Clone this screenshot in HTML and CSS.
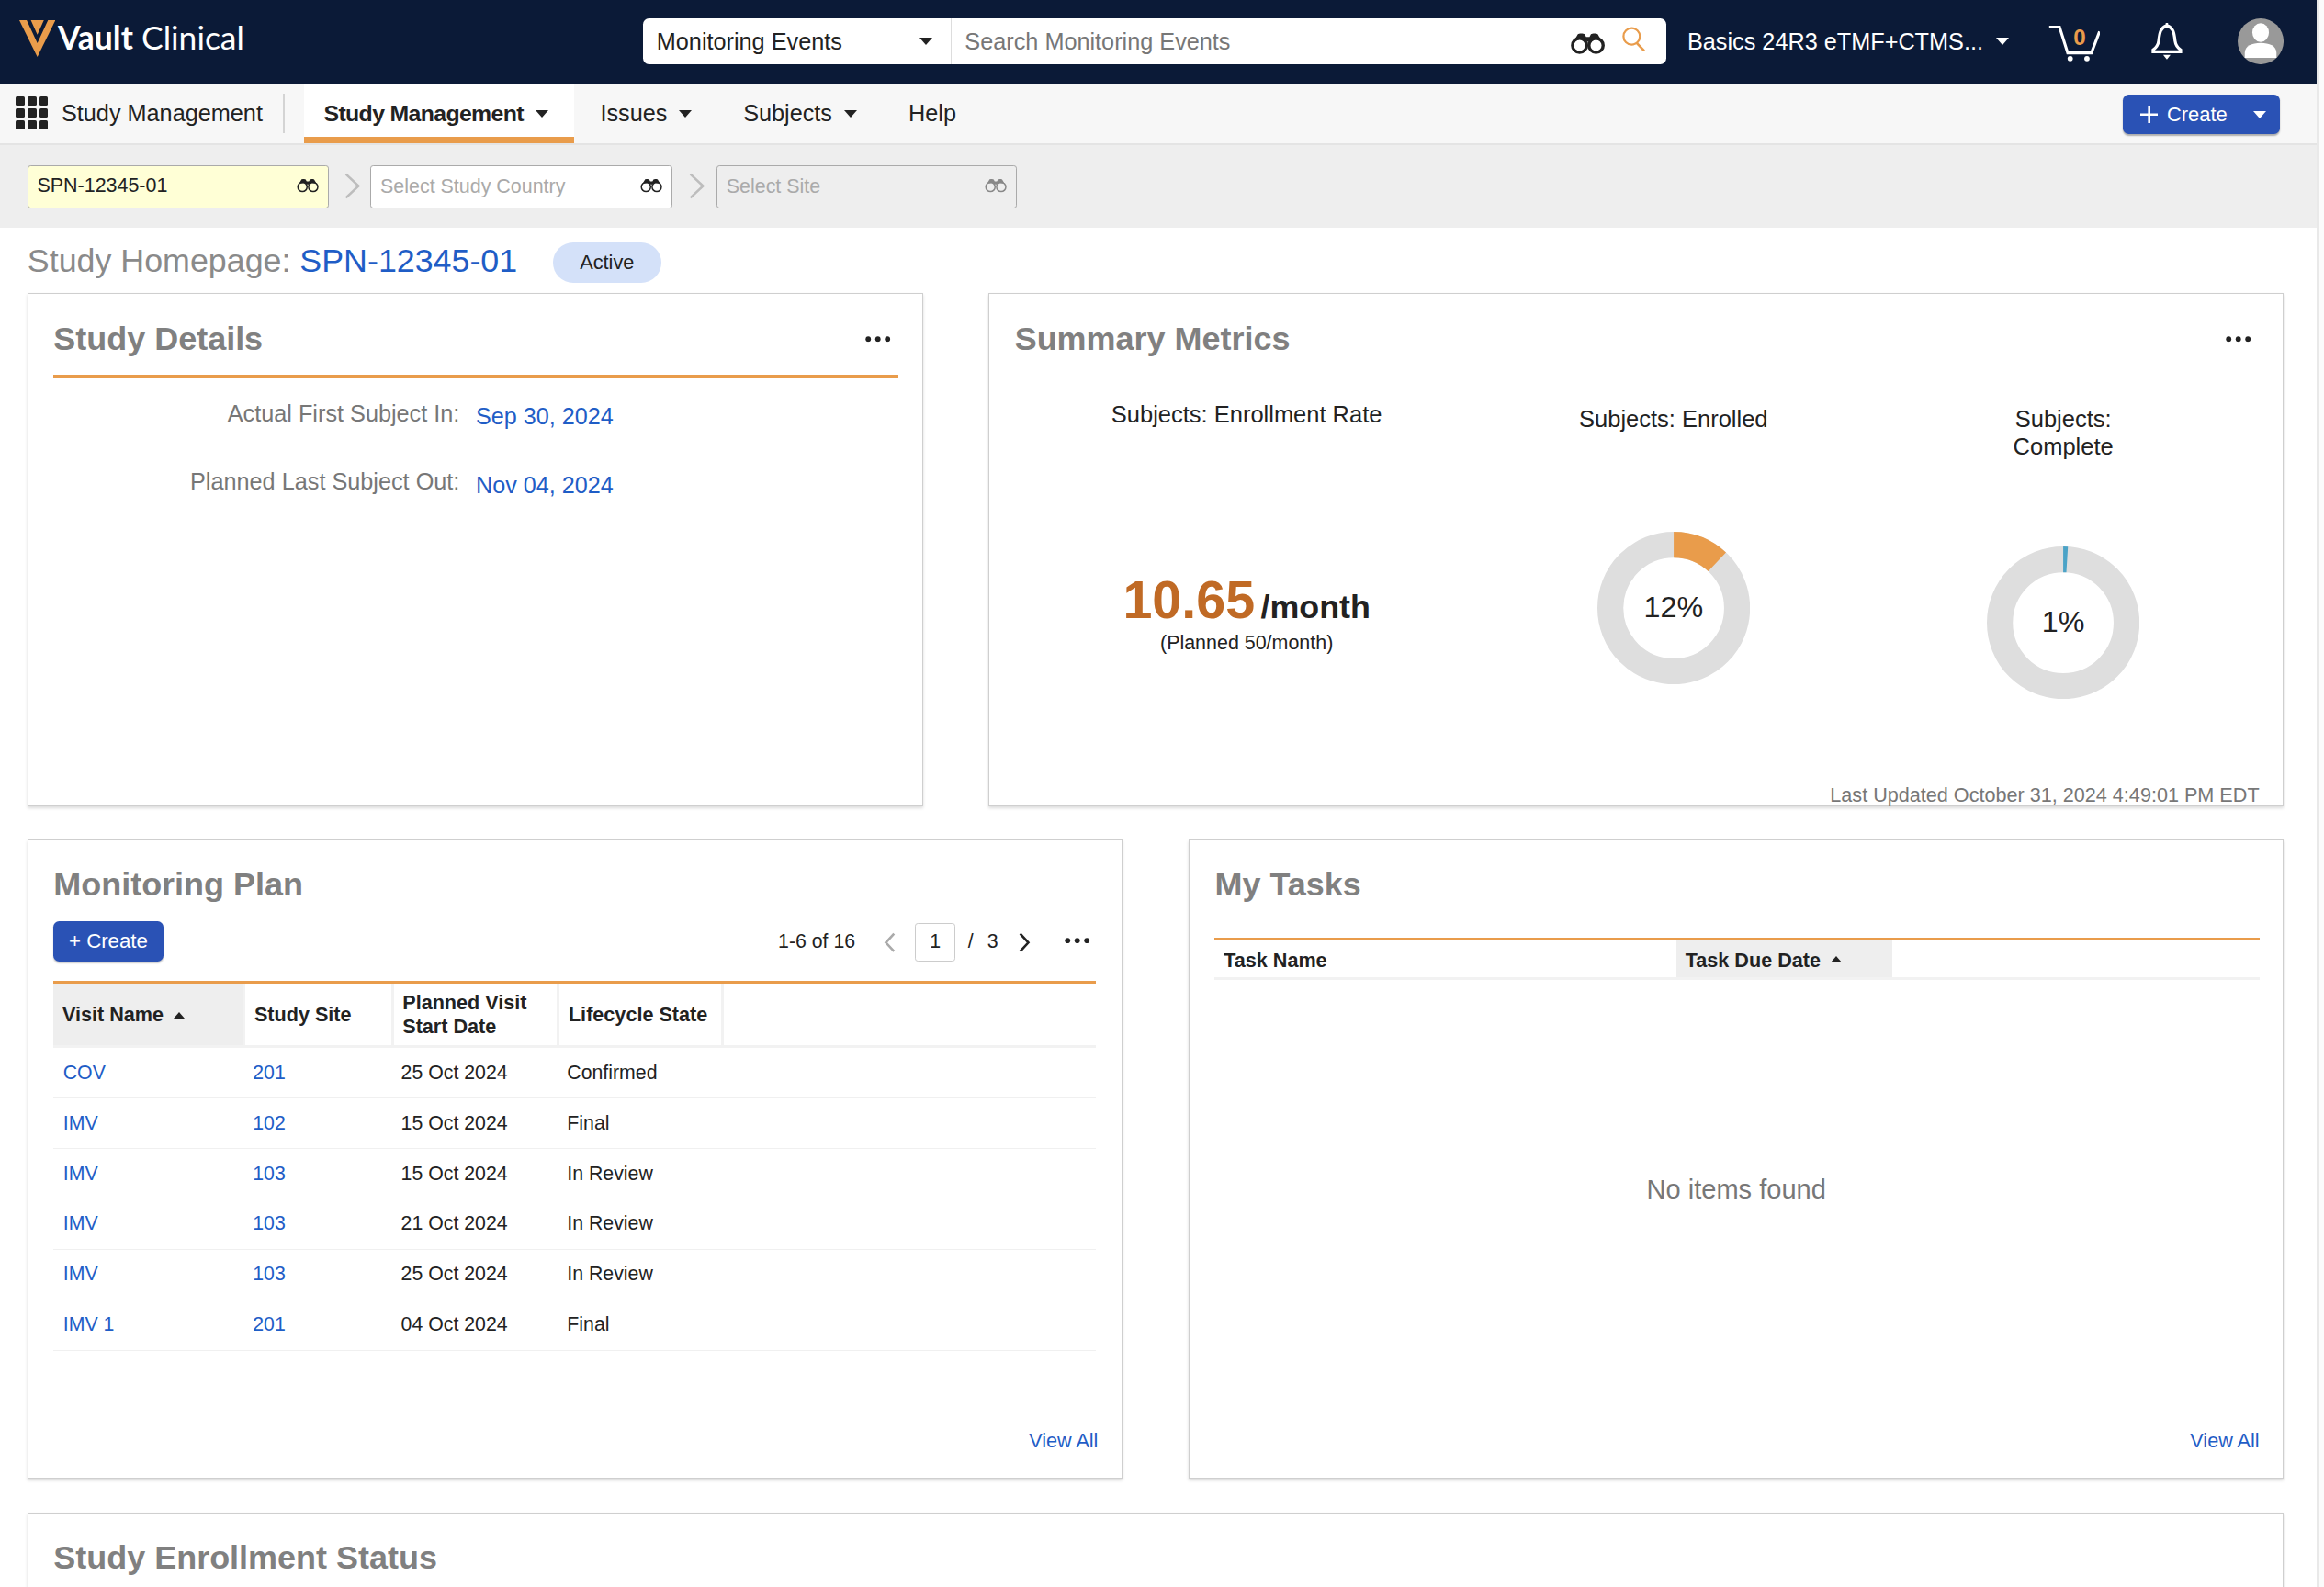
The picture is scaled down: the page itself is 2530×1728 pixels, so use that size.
FILE: index.html
```html
<!DOCTYPE html>
<html lang="en">
<head>
<meta charset="utf-8">
<title>Vault Clinical - Study Homepage</title>
<link rel="stylesheet" href="styles.css">
</head>
<body>
<svg class="defs" width="0" height="0" aria-hidden="true">
  <defs>
    <symbol id="binoc" viewBox="0 0 24 15">
      <path d="M2.5 5.5 5 1.2C5.6.4 9 .4 9.8 1.2L10.8 3h2.4l1-1.8c.8-.8 4.2-.8 4.8 0L21.5 5.5 16 4.6 12 6.4 8 4.6z" fill="currentColor" stroke="none"/>
      <circle cx="6.2" cy="9" r="5" fill="none" stroke="currentColor"/>
      <circle cx="17.8" cy="9" r="5" fill="none" stroke="currentColor"/>
    </symbol>
    <symbol id="dots" viewBox="0 0 17 4">
      <circle cx="2" cy="2" r="1.8" fill="currentColor"/>
      <circle cx="8.5" cy="2" r="1.8" fill="currentColor"/>
      <circle cx="15" cy="2" r="1.8" fill="currentColor"/>
    </symbol>
  </defs>
</svg>
<div class="app">
  <header class="topbar">
    <div class="brand">
      <svg class="logo-mark" viewBox="0 0 24.4 24.8" aria-hidden="true">
        <polygon points="0,0 24.4,0 12.2,24.8" fill="#e99c4b"/>
        <polygon points="5,0 12.2,15.5 19.4,0 16.6,0 12.2,9.8 7.8,0" fill="#0b1a37"/>
      </svg>
      <span class="brand-name"><b>Vault</b> Clinical</span>
    </div>
    <div class="search">
      <div class="search-scope"><span>Monitoring Events</span><i class="caret caret-dark"></i></div>
      <div class="search-field">
        <span class="search-ph">Search Monitoring Events</span>
        <svg class="binoc-lg"><use href="#binoc"/></svg>
        <svg class="magnifier" viewBox="0 0 16 16" aria-hidden="true">
          <circle cx="6.6" cy="6.2" r="5.2" fill="none" stroke="#e99c4b" stroke-width="1.3"/>
          <path d="M9.8 10.4 14.6 15.4" stroke="#e99c4b" stroke-width="1.5" fill="none"/>
        </svg>
      </div>
    </div>
    <div class="context"><span>Basics 24R3 eTMF+CTMS...</span><i class="caret caret-light"></i></div>
    <svg class="cart" viewBox="0 0 35 25" aria-hidden="true">
      <path d="M.5 1.5H7.5L13 19H29L34.5 4.5" fill="none" stroke="#fff" stroke-width="1.9"/>
      <circle cx="14.7" cy="22.8" r="1.8" fill="#fff"/>
      <circle cx="26" cy="22.8" r="1.8" fill="#fff"/>
      <text x="21" y="13.4" class="cart-count">0</text>
    </svg>
    <svg class="bell" viewBox="0 0 21 25" aria-hidden="true">
      <path d="M10.5 1.8C6.2 3.2 5.6 6.5 5 12 4.6 15 3.2 16.8 1.2 18.2V19.4H19.8V18.2C17.8 16.8 16.4 15 16 12 15.4 6.5 14.8 3.2 10.5 1.8Z" fill="none" stroke="#fff" stroke-width="2"/>
      <path d="M10.5 0v2.5" stroke="#fff" stroke-width="1.6"/>
      <path d="M8 21.5h5L10.5 24.6z" fill="#fff"/>
    </svg>
    <svg class="avatar" viewBox="0 0 31 31" aria-hidden="true">
      <circle cx="15.5" cy="15.5" r="15.5" fill="#999"/>
      <ellipse cx="15.5" cy="9.6" rx="5.6" ry="6.4" fill="#fff"/>
      <path d="M4.8 26.6V23.4C4.8 18.6 9.6 16.6 15.5 16.6S26.2 18.6 26.2 23.4V26.6Z" fill="#fff"/>
    </svg>
  </header>

  <nav class="navbar">
    <div class="app-switch">
      <span class="grid-icon"><i></i><i></i><i></i><i></i><i></i><i></i><i></i><i></i><i></i></span>
      <span class="app-name">Study Management</span>
    </div>
    <div class="tab tab-active"><span>Study Management</span><i class="caret caret-dark"></i></div>
    <div class="tab tab-issues"><span>Issues</span><i class="caret caret-dark"></i></div>
    <div class="tab tab-subjects"><span>Subjects</span><i class="caret caret-dark"></i></div>
    <div class="tab tab-help"><span>Help</span></div>
    <div class="split-btn">
      <span class="split-main">
        <svg class="plus" viewBox="0 0 12 12" aria-hidden="true"><path d="M6 0v12M0 6h12" stroke="#fff" stroke-width="1.6"/></svg>
        Create
      </span>
      <span class="split-arrow"><i class="caret caret-light"></i></span>
    </div>
  </nav>

  <div class="crumbs">
    <div class="picker picker-current"><span>SPN-12345-01</span><svg class="binoc-sm"><use href="#binoc"/></svg></div>
    <svg class="crumb-sep crumb-sep-a" viewBox="0 0 11 18" aria-hidden="true"><path d="M1 1 9.5 9 1 17" fill="none" stroke="#bdbdbd" stroke-width="1.6"/></svg>
    <div class="picker picker-open"><span>Select Study Country</span><svg class="binoc-sm"><use href="#binoc"/></svg></div>
    <svg class="crumb-sep crumb-sep-b" viewBox="0 0 11 18" aria-hidden="true"><path d="M1 1 9.5 9 1 17" fill="none" stroke="#bdbdbd" stroke-width="1.6"/></svg>
    <div class="picker picker-off"><span>Select Site</span><svg class="binoc-sm"><use href="#binoc"/></svg></div>
  </div>

  <main class="content">
    <div class="page-title">
      <h1><span class="muted">Study Homepage:</span> <span class="link">SPN-12345-01</span></h1>
      <span class="pill">Active</span>
    </div>

    <div class="row row-top">
      <section class="card card-details">
        <div class="card-head rule">
          <h2>Study Details</h2>
          <svg class="dots"><use href="#dots"/></svg>
        </div>
        <div class="detail">
          <span class="detail-label">Actual First Subject In:</span>
          <span class="detail-value link">Sep 30, 2024</span>
        </div>
        <div class="detail">
          <span class="detail-label">Planned Last Subject Out:</span>
          <span class="detail-value link">Nov 04, 2024</span>
        </div>
      </section>

      <section class="card card-summary">
        <div class="card-head">
          <h2>Summary Metrics</h2>
          <svg class="dots"><use href="#dots"/></svg>
        </div>
        <div class="metrics">
          <div class="metric metric-rate">
            <div class="metric-title">Subjects: Enrollment Rate</div>
            <div class="rate-line"><span class="rate-num">10.65</span><span class="rate-unit">/month</span></div>
            <div class="rate-plan">(Planned 50/month)</div>
          </div>
          <div class="metric metric-chart metric-enrolled">
            <div class="metric-title metric-title-lower">Subjects: Enrolled</div>
            <div class="donut">
              <svg viewBox="0 0 103 103" aria-hidden="true">
                <circle cx="51.5" cy="51.5" r="42.75" fill="none" stroke="#dedede" stroke-width="17.5"/>
                <circle class="arc" cx="51.5" cy="51.5" r="42.75" fill="none" stroke="#e99c4b" stroke-width="17.5" stroke-dasharray="32.2 268.6"/>
              </svg>
              <span>12%</span>
            </div>
          </div>
          <div class="metric metric-chart metric-complete">
            <div class="metric-title metric-title-lower">Subjects:<br>Complete</div>
            <div class="donut">
              <svg viewBox="0 0 103 103" aria-hidden="true">
                <circle cx="51.5" cy="51.5" r="42.75" fill="none" stroke="#dedede" stroke-width="17.5"/>
                <circle class="arc" cx="51.5" cy="51.5" r="42.75" fill="none" stroke="#4ba3c7" stroke-width="17.5" stroke-dasharray="2.7 268.6"/>
              </svg>
              <span>1%</span>
            </div>
          </div>
        </div>
        <div class="updated">Last Updated October 31, 2024 4:49:01 PM EDT</div>
      </section>
    </div>

    <div class="row row-mid">
      <section class="card card-list">
        <div class="list-head"><h2>Monitoring Plan</h2></div>
        <div class="toolbar">
          <span class="btn-small">+ Create</span>
          <div class="pager">
            <span class="pager-count">1-6 of 16</span>
            <svg class="pager-arrow" viewBox="0 0 8 14" aria-hidden="true"><path d="M7 1 1.5 7 7 13" fill="none" stroke="#aaa" stroke-width="1.6"/></svg>
            <span class="pager-box">1</span>
            <span class="pager-total">/ &nbsp;3</span>
            <svg class="pager-arrow pager-next" viewBox="0 0 8 14" aria-hidden="true"><path d="M1 1 6.5 7 1 13" fill="none" stroke="#222" stroke-width="1.6"/></svg>
            <svg class="dots"><use href="#dots"/></svg>
          </div>
        </div>
        <table class="grid">
          <colgroup><col class="c1"><col class="c2"><col class="c3"><col class="c4"><col></colgroup>
          <thead>
            <tr>
              <th class="sorted">Visit Name <i class="caret-up"></i></th>
              <th>Study Site</th>
              <th>Planned Visit<br>Start Date</th>
              <th>Lifecycle State</th>
              <th class="last"></th>
            </tr>
          </thead>
          <tbody>
            <tr><td><span class="link">COV</span></td><td><span class="link">201</span></td><td>25 Oct 2024</td><td>Confirmed</td><td></td></tr>
            <tr><td><span class="link">IMV</span></td><td><span class="link">102</span></td><td>15 Oct 2024</td><td>Final</td><td></td></tr>
            <tr><td><span class="link">IMV</span></td><td><span class="link">103</span></td><td>15 Oct 2024</td><td>In Review</td><td></td></tr>
            <tr><td><span class="link">IMV</span></td><td><span class="link">103</span></td><td>21 Oct 2024</td><td>In Review</td><td></td></tr>
            <tr><td><span class="link">IMV</span></td><td><span class="link">103</span></td><td>25 Oct 2024</td><td>In Review</td><td></td></tr>
            <tr><td><span class="link">IMV 1</span></td><td><span class="link">201</span></td><td>04 Oct 2024</td><td>Final</td><td></td></tr>
          </tbody>
        </table>
        <div class="card-foot"><span class="link">View All</span></div>
      </section>

      <section class="card card-list">
        <div class="list-head list-head-tall"><h2>My Tasks</h2></div>
        <div class="task-head">
          <span class="task-col">Task Name</span>
          <span class="task-col task-col-sorted">Task Due Date <i class="caret-up"></i></span>
        </div>
        <div class="empty">No items found</div>
        <div class="card-foot"><span class="link">View All</span></div>
      </section>
    </div>

    <section class="card card-enroll">
      <div class="list-head"><h2>Study Enrollment Status</h2></div>
    </section>
  </main>
</div>
<div class="gutter"></div>
</body>
</html>
```

FILE: styles.css
```css
html { zoom: 1.6135; }
* { box-sizing: border-box; }
body {
  margin: 0;
  height: 1071px;
  width: 1568px;
  overflow: hidden;
  display: flex;
  background: #fff;
  font-family: "Liberation Sans", Arial, sans-serif;
  color: #222;
}
h1, h2 { margin: 0; }
.defs { position: absolute; }
.app { width: 1563px; height: 1071px; overflow: hidden; flex: none; }
.gutter { flex: 1; background: #fbfbfb; border-left: 2px solid #e9e9e9; }
.link { color: #1f5dc6; }
.muted { color: #8a8a8a; }

/* carets */
.caret { display: inline-block; width: 0; height: 0; border-style: solid; border-width: 5px 4.5px 0; border-color: transparent; }
.caret-dark { border-top-color: #222; }
.caret-light { border-top-color: #fff; }
.caret-up { display: inline-block; width: 0; height: 0; margin: 0 0 2px 3px; border-style: solid; border-width: 0 4px 4.5px; border-color: transparent transparent #222; }

/* top bar */
.topbar { height: 57px; background: #0b1a37; display: flex; align-items: flex-start; color: #fff; }
.brand { width: 434px; height: 57px; flex: none; padding-left: 13px; display: flex; align-items: flex-start; }
.logo-mark { width: 24.4px; height: 24.8px; margin-top: 13.6px; flex: none; }
.brand-name { font-family: Lato, sans-serif; font-size: 22px; line-height: 28px; margin: 11px 0 0 1.6px; white-space: nowrap; }
.brand-name b { font-weight: 700; }
.search { width: 690px; height: 31px; margin-top: 12.4px; display: flex; background: #fff; border-radius: 4px; font-size: 15.65px; flex: none; }
.search-scope { width: 208px; padding: 0 12px 0 9px; display: flex; align-items: center; justify-content: space-between; border-right: 1px solid #ddd; color: #222; }
.search-field { flex: 1; padding: 0 13px 0 9px; display: flex; align-items: center; }
.search-ph { flex: 1; color: #777; }
.binoc-lg { width: 23px; height: 15px; color: #222; margin: 3px 8px 0 0; stroke-width: 2.2; }
.magnifier { width: 17px; height: 17px; margin: -3px 0 0 3px; }
.context { width: 232.5px; margin: 19px 0 0 14.5px; font-size: 15.65px; line-height: 18px; display: flex; align-items: center; white-space: nowrap; flex: none; }
.context .caret { margin-left: 9px; }
.cart { width: 35px; height: 25px; margin: 16.5px 0 0 11px; flex: none; }
.cart-count { font: 700 15px "Liberation Sans", Arial, sans-serif; fill: #e99c4b; text-anchor: middle; }
.bell { width: 21px; height: 25px; margin: 15.5px 0 0 34.5px; flex: none; }
.avatar { width: 31px; height: 31px; margin: 12.4px 0 0 37.5px; flex: none; }

/* nav */
.navbar { height: 41px; background: #f7f7f7; border-bottom: 1.5px solid #e4e4e4; display: flex; font-size: 15.65px; }
.app-switch { width: 205px; padding-left: 10.5px; display: flex; align-items: center; flex: none; height: 39.5px; position: relative; }
.app-switch::after { content: ""; position: absolute; left: 191px; top: 6px; height: 27px; width: 1px; background: #d4d4d4; }
.grid-icon { width: 22px; height: 22px; display: grid; grid-template-columns: repeat(3, 6px); grid-auto-rows: 6px; gap: 2px; margin-top: -1px; }
.grid-icon i { background: #222; border-radius: 1px; }
.app-name { margin-left: 9px; margin-top: -1px; }
.tab { display: flex; align-items: center; height: 39.5px; flex: none; }
.tab .caret { margin-left: 8px; }
.tab-active { width: 182.5px; padding: 4px 0 0 13.5px; background: #fff; border-bottom: 4.4px solid #e99c4b; font-weight: 700; font-size: 15.4px; letter-spacing: -.4px; }
.tab-issues { margin-left: 17.5px; width: 96.5px; }
.tab-subjects { width: 111.5px; }
.split-btn { margin-left: auto; margin-right: 25px; margin-top: 7px; height: 26.5px; width: 106px; display: flex; color: #fff; background: #2a52b5; border-radius: 4px; box-shadow: 0 1px 1px rgba(0,0,0,.3); font-size: 13.6px; }
.split-main { width: 79px; display: flex; align-items: center; padding-left: 12px; gap: 6px; border-right: 1px solid #7f96d2; }
.plus { width: 12px; height: 12px; }
.split-arrow { flex: 1; display: flex; align-items: center; justify-content: center; }

/* breadcrumb pickers */
.crumbs { height: 55.5px; background: #eee; display: flex; align-items: flex-start; padding: 13.5px 0 0 18.5px; font-size: 13.3px; }
.picker { width: 203.5px; height: 29px; border: 1px solid #aaa; border-radius: 2px; display: flex; align-items: center; justify-content: space-between; padding: 0 6px 0 6px; flex: none; }
.picker-current { background: #ffffd6; color: #222; }
.picker-current span { margin-top: -1.5px; }
.picker-open { background: #fff; color: #aaa; }
.picker-off { background: #eee; color: #aaa; width: 202.5px; }
.binoc-sm { width: 15px; height: 10px; color: #222; margin-top: -1px; stroke-width: 1.5; }
.picker-off .binoc-sm { color: #888; }
.crumb-sep { width: 11px; height: 18px; margin-top: 5px; flex: none; }
.crumb-sep-a { margin-left: 10.5px; margin-right: 6.5px; }
.crumb-sep-b { margin-left: 11.5px; margin-right: 7.5px; }

/* page */
.content { padding: 0 22px 0 18.5px; }
.page-title { height: 44.5px; display: flex; align-items: center; padding-top: 3px; }
.page-title h1 { font-size: 22.2px; font-weight: 400; line-height: 26px; margin-top: -1px; white-space: nowrap; }
.pill { margin-left: 24px; height: 27px; width: 73px; border-radius: 14px; background: #d4e1f9; font-size: 13.5px; display: flex; align-items: center; justify-content: center; color: #222; }

.card { background: #fff; border: 1px solid #cfcfcf; box-shadow: 0 1px 2px rgba(0,0,0,.14); padding: 0 16px 0 17px; }
.card h2 { font-size: 22.3px; line-height: 28px; color: #808080; font-weight: 700; white-space: nowrap; }
.row { display: flex; justify-content: space-between; margin-bottom: 22.5px; }
.row-top .card { height: 346px; }
.row-mid .card { height: 431.5px; width: 739px; }
.row-top .card-details { width: 604.5px; }
.card-summary { width: 874px; }

.card-head { height: 57px; display: flex; align-items: center; justify-content: space-between; border-bottom: 3px solid transparent; padding-top: 5px; }
.card-head.rule { border-bottom-color: #e99c4b; }
.card-head .dots { margin-right: 5.5px; margin-top: 1px; }
.dots { width: 17px; height: 4px; color: #222; flex: none; }

.detail { display: flex; height: 46px; font-size: 15.65px; line-height: 20px; align-items: flex-start; }
.card-head + .detail { margin-top: 13.5px; }
.detail-label { width: 274px; text-align: right; color: #777; }
.detail-value { margin: 2px 0 0 11px; font-size: 15.6px; }

.metrics { display: flex; height: 272.5px; text-align: center; }
.metric-title { font-size: 15.8px; line-height: 18.5px; height: 38px; color: #222; }
.metric-rate { width: 313px; padding-top: 15.5px; }
.metric-chart { width: 204px; padding-top: 18.5px; border-bottom: 1px dotted #bbb; }
.metric-enrolled { margin-left: 29.5px; }
.metric-complete { margin-left: 59px; }
.rate-line { margin-top: 75.5px; line-height: 40px; white-space: nowrap; }
.rate-num { font-size: 35.6px; font-weight: 700; color: #c06a25; }
.rate-unit { font-size: 22.2px; font-weight: 700; color: #222; margin-left: 4px; }
.rate-plan { font-size: 13.3px; line-height: 16px; color: #222; margin-top: -5px; }
.donut { width: 103px; height: 103px; margin: 46.5px auto 0; display: grid; place-items: center; font-size: 20px; color: #222; }
.metric-complete .donut { margin-top: 56.5px; }
.donut > * { grid-area: 1 / 1; }
.donut svg { width: 103px; height: 103px; display: block; }
.arc { transform: rotate(-90deg); transform-origin: 51.5px 51.5px; }
.updated { font-size: 13.4px; line-height: 14px; text-align: right; color: #777; white-space: nowrap; padding-top: 1.5px; }

.card-list { display: flex; flex-direction: column; }
.list-head { height: 54.5px; padding-top: 15.5px; flex: none; }
.list-head-tall { border-bottom: 2px solid #e99c4b; height: 67.5px; }
.toolbar { height: 27px; display: flex; justify-content: space-between; align-items: center; margin-bottom: 13.5px; flex: none; padding-right: 5.5px; }
.btn-small { width: 74px; height: 27px; background: #2a52b5; color: #fff; font-size: 13.8px; border-radius: 4px; display: flex; align-items: center; justify-content: center; box-shadow: 0 1px 1px rgba(0,0,0,.2); }
.pager { display: flex; align-items: center; font-size: 13.2px; margin-top: 1.5px; }
.pager-arrow { width: 8px; height: 14px; flex: none; }
.pager-count { margin-right: 19px; }
.pager-box { width: 27px; height: 26.5px; margin-left: 13.5px; border: 1px solid #ccc; border-radius: 2px; display: flex; align-items: center; justify-content: center; }
.pager-total { margin-left: 8.5px; white-space: pre; word-spacing: 1px; }
.pager-next { margin-left: 14px; }
.pager .dots { margin-left: 23px; margin-top: -2.5px; }

.grid { width: 703.5px; border-collapse: separate; border-spacing: 0; table-layout: fixed; border-top: 2px solid #e99c4b; font-size: 13.2px; flex: none; }
.c1 { width: 129.5px; }
.c2 { width: 100px; }
.c3 { width: 112px; }
.c4 { width: 110.5px; }
.grid th { height: 43.5px; padding: 0 5px 0 6px; text-align: left; font-weight: 700; font-size: 13.4px; line-height: 16px; border-bottom: 2px solid #f2f2f2; border-right: 2px solid #f2f2f2; vertical-align: middle; white-space: nowrap; }
.grid th.sorted { background: #eee; }
.grid th.last { border-right: 0; }
.grid td { height: 34px; padding: 0 5px 0 6.5px; border-bottom: 1px solid #f0f0f0; color: #222; }
.grid td + td { padding-left: 5px; }

.task-head { display: flex; height: 27px; border-bottom: 2px solid #f2f2f2; font-size: 13.4px; font-weight: 700; flex: none; }
.task-col { display: flex; align-items: center; width: 311.5px; padding: 2px 0 0 6px; white-space: pre; }
.task-col-sorted { width: 145.5px; background: #eee; }
.empty { flex: 1; display: flex; align-items: center; justify-content: center; font-size: 18px; color: #777; padding: 0 1px 20px 0; }

.card-foot { margin-top: auto; padding-bottom: 17px; text-align: right; font-size: 13.4px; line-height: 16px; flex: none; }
.card-enroll { height: 200px; }
```
